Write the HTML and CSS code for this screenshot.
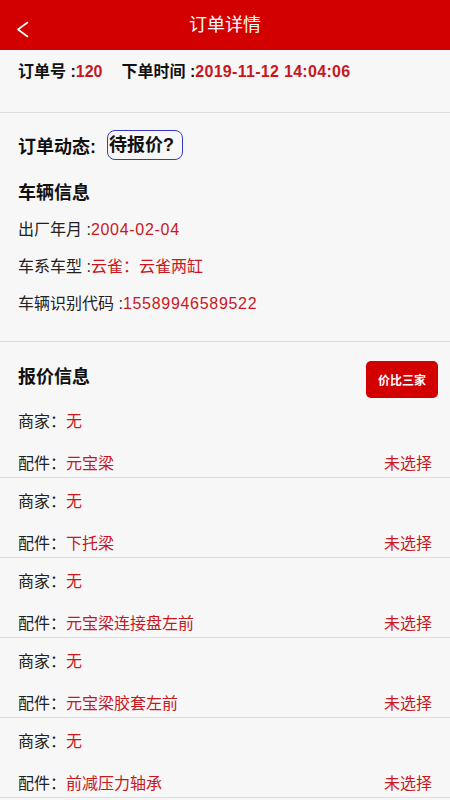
FILE: index.html
```html
<!DOCTYPE html>
<html lang="zh-CN">
<head>
<meta charset="utf-8">
<title>订单详情</title>
<link rel="stylesheet" href="styles.css">
</head>
<body>
<header class="topbar">
  <span class="back">
    <svg width="50" height="50" viewBox="0 0 50 50"><path d="M27.5 22.5 L18 29.5 L27.5 36.5" fill="none" stroke="#fff" stroke-width="1.6" stroke-linecap="round" stroke-linejoin="round"/></svg>
  </span>
  <h1 class="title">订单详情</h1>
  <span class="spacer"></span>
</header>

<section class="sec sec-order">
  <div class="order-row">
    <span class="bold">订单号 :<span class="red">120</span></span>
    <span class="bold order-time">下单时间 :<span class="red">2019-11-12 14:04:06</span></span>
  </div>
</section>

<section class="sec sec-car">
  <div class="status-row">
    <span class="h2">订单动态:</span>
    <span class="status-box">待报价?</span>
  </div>
  <div class="h2 car-title">车辆信息</div>
  <div class="info-line">出厂年月 :<span class="red num">2004-02-04</span></div>
  <div class="info-line">车系车型 :<span class="red">云雀：云雀两缸</span></div>
  <div class="info-line">车辆识别代码 :<span class="red num">15589946589522</span></div>
</section>

<section class="sec sec-quote">
  <div class="quote-head">
    <span class="h2 quote-title">报价信息</span>
    <button class="cmp-btn">价比三家</button>
  </div>
  <div class="item">
    <div class="item-line"><span>商家：<span class="red">无</span></span></div>
    <div class="item-line"><span>配件：<span class="red">元宝梁</span></span><span class="red">未选择</span></div>
  </div>
  <div class="item">
    <div class="item-line"><span>商家：<span class="red">无</span></span></div>
    <div class="item-line"><span>配件：<span class="red">下托梁</span></span><span class="red">未选择</span></div>
  </div>
  <div class="item">
    <div class="item-line"><span>商家：<span class="red">无</span></span></div>
    <div class="item-line"><span>配件：<span class="red">元宝梁连接盘左前</span></span><span class="red">未选择</span></div>
  </div>
  <div class="item">
    <div class="item-line"><span>商家：<span class="red">无</span></span></div>
    <div class="item-line"><span>配件：<span class="red">元宝梁胶套左前</span></span><span class="red">未选择</span></div>
  </div>
  <div class="item">
    <div class="item-line"><span>商家：<span class="red">无</span></span></div>
    <div class="item-line"><span>配件：<span class="red">前减压力轴承</span></span><span class="red">未选择</span></div>
  </div>
</section>
</body>
</html>
```

FILE: styles.css
```css
* { box-sizing: border-box; }
html, body {
  margin: 0;
  padding: 0;
  background: #f7f7f7;
  font-family: "Liberation Sans", "Noto Sans CJK SC", sans-serif;
  color: #222;
  font-size: 16px;
}
.topbar {
  display: grid;
  grid-template-columns: 50px 1fr 50px;
  align-items: center;
  height: 50px;
  background: #d20000;
}
.back { display: flex; height: 50px; }
.title {
  margin: 0;
  padding-top: 1px;
  text-align: center;
  font-size: 18px;
  font-weight: normal;
  color: #fff;
  line-height: 49px;
}
.red { color: #c9171e; }
.num { letter-spacing: 0.7px; }
.bold { font-weight: bold; color: #111; }
.sec {
  padding-left: 18px;
  padding-right: 18px;
  border-bottom: 1px solid #dcdcdc;
}
.sec-order {
  padding-top: 10px;
  padding-bottom: 28px;
  height: 63px;
}
.order-row {
  display: flex;
  line-height: 24px;
  font-size: 16px;
}
.order-time { margin-left: 19px; }
.order-time .red { letter-spacing: 0.3px; }
.sec-car {
  padding-top: 17px;
  padding-bottom: 25px;
}
.h2 {
  font-size: 18px;
  font-weight: bold;
  color: #111;
}
.status-row {
  display: flex;
  align-items: center;
  height: 30px;
}
.status-box {
  margin-left: 11px;
  height: 30px;
  width: 76px;
  padding-left: 1px;
  border: 1px solid #3737cc;
  border-radius: 8px;
  font-size: 18px;
  font-weight: bold;
  color: #111;
  line-height: 28px;
}
.car-title {
  margin-top: 21px;
  line-height: 24px;
}
.info-line {
  margin-top: 13px;
  line-height: 24px;
  font-size: 16px;
  color: #222;
}
.sec-quote {
  padding-top: 19px;
  border-bottom: none;
  padding-right: 12px;
}
.quote-head {
  display: flex;
  justify-content: space-between;
  align-items: center;
  height: 37px;
}
.quote-title {
  line-height: 24px;
  margin-bottom: 6px;
}
.cmp-btn {
  width: 72px;
  height: 37px;
  border: none;
  border-radius: 5px;
  background: #d20000;
  color: #fff;
  font-family: "Liberation Sans", "Noto Sans CJK SC", sans-serif;
  font-size: 12px;
  font-weight: bold;
  padding: 0;
}
.item {
  margin-left: -18px;
  margin-right: -12px;
  padding: 12px 18px 1px 18px;
  border-bottom: 1px solid #dcdcdc;
  display: flex;
  flex-direction: column;
  gap: 18px;
}
.item-line {
  display: flex;
  justify-content: space-between;
  line-height: 24px;
  font-size: 16px;
  color: #222;
}
```
